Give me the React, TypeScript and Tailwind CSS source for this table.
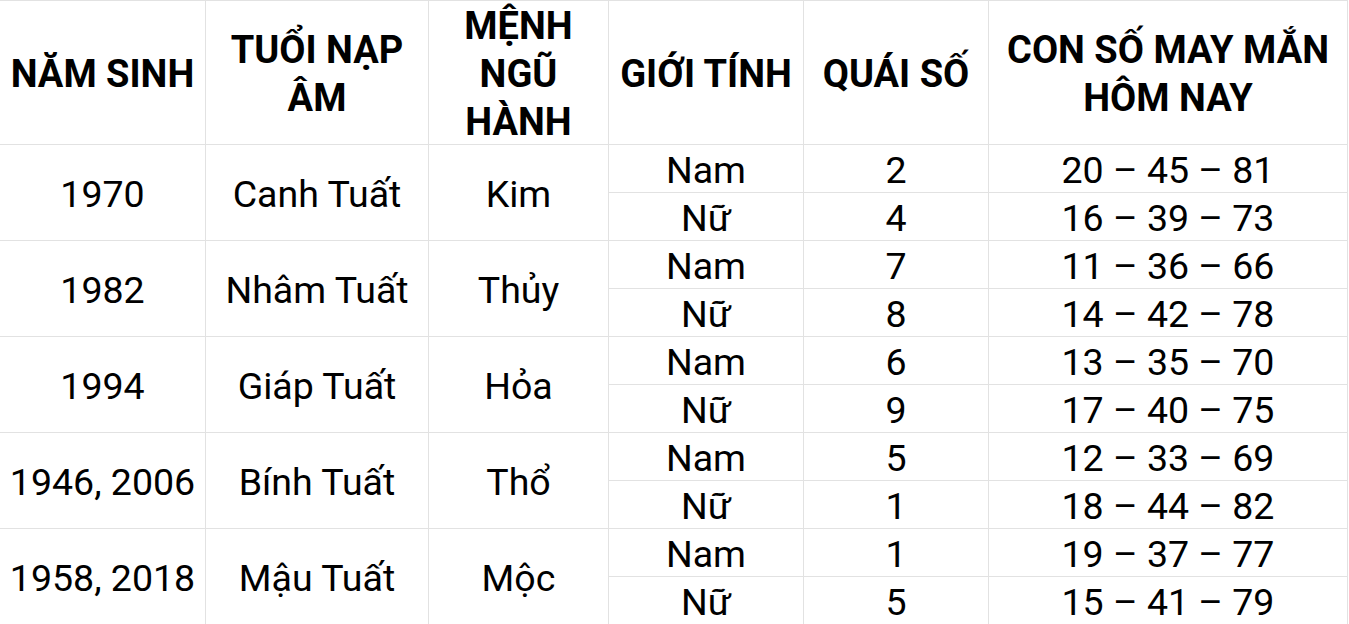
import React from "react";

const groups = [
  { year: "1970", tuoi: "Canh Tuất", menh: "Kim", rows: [["Nam", "2", "20 – 45 – 81"], ["Nữ", "4", "16 – 39 – 73"]] },
  { year: "1982", tuoi: "Nhâm Tuất", menh: "Thủy", rows: [["Nam", "7", "11 – 36 – 66"], ["Nữ", "8", "14 – 42 – 78"]] },
  { year: "1994", tuoi: "Giáp Tuất", menh: "Hỏa", rows: [["Nam", "6", "13 – 35 – 70"], ["Nữ", "9", "17 – 40 – 75"]] },
  { year: "1946, 2006", tuoi: "Bính Tuất", menh: "Thổ", rows: [["Nam", "5", "12 – 33 – 69"], ["Nữ", "1", "18 – 44 – 82"]] },
  { year: "1958, 2018", tuoi: "Mậu Tuất", menh: "Mộc", rows: [["Nam", "1", "19 – 37 – 77"], ["Nữ", "5", "15 – 41 – 79"]] },
];

const headers = ["NĂM SINH", "TUỔI NẠP ÂM", "MỆNH NGŨ HÀNH", "GIỚI TÍNH", "QUÁI SỐ", "CON SỐ MAY MẮN HÔM NAY"];

const cell = "bg-white flex items-center justify-center text-[37.5px] leading-[48px] whitespace-nowrap pt-[3px]";

export default function App() {
  return (
    <div className="w-[1349px] h-[624px] overflow-hidden bg-white text-black" style={{ fontFamily: "Roboto, 'Noto Sans', sans-serif" }}>
      <div className="w-[1348px] grid grid-cols-[205px_222px_179px_194px_184px_358px] grid-rows-[143px_repeat(10,47px)] gap-px bg-[#e2e2e2] pt-px pr-px">
        {headers.map((h) => (
          <div key={h} className="bg-white flex items-center justify-center text-center font-bold text-[38px] leading-[48px] px-1 pt-[2px]">
            {h}
          </div>
        ))}
        {groups.map((g) => (
          <React.Fragment key={g.year}>
            <div className={"row-span-2 " + cell}>{g.year}</div>
            <div className={"row-span-2 " + cell}>{g.tuoi}</div>
            <div className={"row-span-2 " + cell}>{g.menh}</div>
            {g.rows.map((r, i) => (
              <React.Fragment key={i}>
                <div className={"col-start-4 " + cell}>{r[0]}</div>
                <div className={cell}>{r[1]}</div>
                <div className={cell}>{r[2]}</div>
              </React.Fragment>
            ))}
          </React.Fragment>
        ))}
      </div>
    </div>
  );
}
